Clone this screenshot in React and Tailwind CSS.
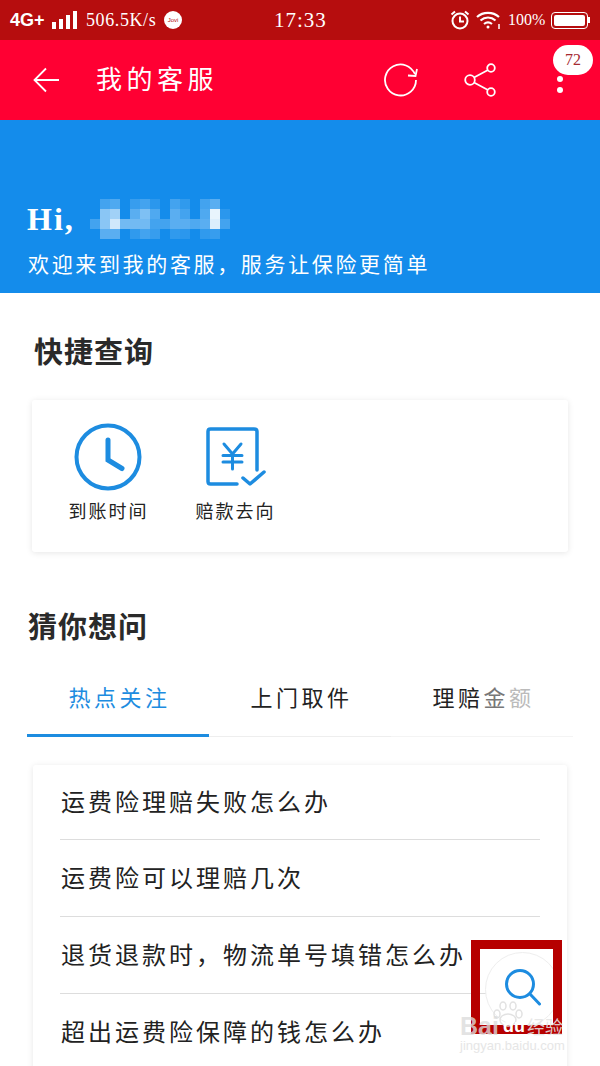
const cjk = "font-['Noto_Sans_CJK_SC',sans-serif]";
const serif = "font-['Liberation_Serif','Noto_Sans_CJK_SC',serif]";

const blur = [
  [0, .2, .25, 0, .15, .2, .1, 0, .2, .12, 0, .2, .3, 0],
  [0, .5, .6, 0, .3, .45, .25, 0, .3, .2, 0, .25, .9, .1],
  [.2, .5, .8, .4, .4, .4, .2, .2, .3, .3, .25, .3, .85, .2],
  [0, .3, .3, 0, .12, .2, .15, 0, .12, .1, 0, .12, .15, 0],
];

const questions = [
  "运费险理赔失败怎么办",
  "运费险可以理赔几次",
  "退货退款时，物流单号填错怎么办",
  "超出运费险保障的钱怎么办",
];

const StatusBar = () => (
  <div className="flex h-10 shrink-0 items-center bg-[#b60d0e] pl-[10px] pr-[10px] text-white">
    <span className="w-[42px] font-['Liberation_Sans',sans-serif] text-[18px] font-bold leading-none">4G+</span>
    <div className="flex h-[18px] items-end gap-[3px]">
      <span className="h-[7px] w-[4px] bg-white" />
      <span className="h-[10px] w-[4px] bg-white" />
      <span className="h-[14px] w-[4px] bg-white" />
      <span className="h-[18px] w-[4px] bg-white" />
    </div>
    <span className={`${serif} ml-[9px] w-[78px] text-[18px] leading-none tracking-[.6px]`}>506.5K/s</span>
    <span className="flex h-[18px] w-[18px] items-center justify-center rounded-full bg-white font-['Liberation_Sans',sans-serif] text-[6px] text-[#b60d0e]">Jovi</span>
    <span className={`${serif} ml-[92px] w-[176px] text-[21px] leading-none tracking-[1px]`}>17:33</span>
    <svg width="20" height="20" viewBox="0 0 20 20" fill="none" stroke="white" strokeWidth="2">
      <circle cx="10" cy="11" r="7.5" />
      <path d="M10 6.5V11.5H14M1.5 4.5 5 1.5M18.5 4.5 15 1.5" />
    </svg>
    <svg className="ml-[6px]" width="26" height="20" viewBox="0 0 26 20" fill="none" stroke="white" strokeWidth="2.2">
      <path d="M1 7C7 1.5 17 1.5 23 7M4.5 10.5C9 6.5 15 6.5 19.5 10.5M8 14C10.5 12 13.500 12 16 14" />
      <circle cx="12" cy="17" r="1.500" fill="white" stroke="none" />
      <path d="M23 14V19" strokeWidth="1.500" />
    </svg>
    <span className={`${serif} ml-[6px] w-[43px] text-[16px] leading-none`}>100%</span>
    <div className="flex items-center">
      <div className="h-[17px] w-[37px] rounded-[4px] border border-white p-[2px]">
        <div className="h-full w-full rounded-[2px] bg-white" />
      </div>
      <span className="h-[6px] w-[2px] bg-white" />
    </div>
  </div>
);

const Header = () => (
  <div className="relative flex h-20 shrink-0 items-center bg-[#ff0033] text-white">
    <svg className="ml-[33px]" width="27" height="26" viewBox="0 0 27 26" fill="none" stroke="white" strokeWidth="1.800">
      <path d="M26 13H1.500M13 1.500 1.500 13 13 24.500" />
    </svg>
    <span className={`${cjk} ml-9 pb-[6px] text-[26px] tracking-[4.500px]`}>我的客服</span>
    <svg className="ml-auto" width="36" height="36" viewBox="0 0 36 36" fill="none" stroke="white" strokeWidth="1.800">
      <path d="M33 18A15.500 15.500 0 1 1 23 3.500C27 5 29.500 7.500 32 12" />
      <path d="M25 13.500 32.500 14 34 7" />
    </svg>
    <svg className="ml-[44px]" width="36" height="36" viewBox="0 0 36 36" fill="none" stroke="white" strokeWidth="1.800">
      <circle cx="7" cy="18" r="4.800" />
      <circle cx="28" cy="6" r="3.800" />
      <circle cx="28" cy="30" r="3.800" />
      <path d="M11 15.500 25 8M11 20.500 25 28" />
    </svg>
    <div className="ml-[58px] mr-[37px] mt-2 flex flex-col gap-[5px]">
      <span className="h-[6px] w-[6px] rounded-full bg-white" />
      <span className="h-[6px] w-[6px] rounded-full bg-white" />
    </div>
    <span className={`${serif} absolute right-[7px] top-[5px] flex h-[30px] w-10 items-center justify-center rounded-full bg-white text-[16px] text-[#a62a30]`}>72</span>
  </div>
);

const Greeting = () => (
  <div className="flex h-[173px] shrink-0 flex-col justify-end bg-[#148ceb] pl-[27px] pb-[15px] text-white">
    <div className="flex items-center">
      <span className={`${serif} w-[63px] text-[32px] font-bold leading-[40px] tracking-[2px]`}>Hi,</span>
      <div className="grid grid-cols-[repeat(14,10px)] grid-rows-[repeat(4,10px)]">
        {blur.flat().map((a, i) => (
          <span key={i} className="bg-white" style={{ opacity: a }} />
        ))}
      </div>
    </div>
    <p className={`${cjk} ml-px mt-[9px] text-[21px] leading-[30px] tracking-[2.650px]`}>欢迎来到我的客服，服务让保险更简单</p>
  </div>
);

const ClockIcon = () => (
  <svg width="68" height="68" viewBox="0 0 68 68" fill="none" stroke="#1d8ce0" strokeWidth="4" strokeLinecap="round">
    <circle cx="34" cy="34" r="31.500" />
    <path d="M34 17V37L48 45.500" strokeWidth="5" />
  </svg>
);

const PayIcon = () => (
  <svg className="ml-[2px]" width="60" height="60" viewBox="0 0 60 60" fill="none" stroke="#1d8ce0" strokeWidth="3.500" strokeLinecap="round" strokeLinejoin="round">
    <path d="M31 57H4.500Q2 57 2 54.500V4.500Q2 2 4.500 2H48Q51 2 51 4.500V43" />
    <path d="M18 17 26.500 27 35 17M26.500 27V42M17 28.500H36M17 35H36" strokeWidth="3" />
    <path d="M37 51 44 57 58 45" />
  </svg>
);

const Quick = ({ icon, label }) => (
  <div className="flex w-[127px] flex-col items-center">
    <div className="flex h-[68px] items-center">{icon}</div>
    <span className={`${cjk} mt-[7px] pl-[2px] text-[18px] leading-[24px] tracking-[2px] text-[#222]`}>{label}</span>
  </div>
);

const Overlay = () => (
  <>
    <div className="absolute left-[485px] top-[952px] h-[75px] w-[75px] rounded-full border border-[#eee] bg-white" />
    <svg className="absolute left-[505px] top-[969px]" width="36" height="38" viewBox="0 0 36 38" fill="none" stroke="#1d8ce0" strokeWidth="3" strokeLinecap="round">
      <circle cx="15" cy="15" r="13.500" />
      <path d="M25 25 34.500 35" />
    </svg>
    <div className="absolute left-[471px] top-[940px] h-[94px] w-[91px] border-[9px] border-[#b60000]" />
    <svg className="absolute left-[490px] top-[1000px]" width="36" height="28" viewBox="0 0 36 28" fill="none" stroke="#e2e2e2" strokeWidth="1.500">
      <ellipse cx="18" cy="20" rx="8" ry="6" />
      <ellipse cx="7" cy="14" rx="3" ry="4" />
      <ellipse cx="13" cy="6" rx="3" ry="4" />
      <ellipse cx="23" cy="6" rx="3" ry="4" />
      <ellipse cx="29" cy="14" rx="3" ry="4" />
    </svg>
    <span className="absolute left-[460px] top-[1015px] whitespace-nowrap font-['Liberation_Sans',sans-serif] text-[25px] font-bold leading-[22px] text-[#dcdcdc]/80">Bai</span>
    <span className="absolute left-[503px] top-[1016px] whitespace-nowrap font-['Liberation_Sans',sans-serif] text-[18px] font-bold leading-[20px] text-white">du</span>
    <span className={`${cjk} absolute left-[527px] top-[1015px] whitespace-nowrap text-[18px] leading-[22px] text-[#e4e4e4]/90`}>经验</span>
    <span className="absolute left-[460px] top-[1038px] whitespace-nowrap font-['Liberation_Sans',sans-serif] text-[13px] leading-4 text-[#e6e6e6]">jingyan.baidu.com</span>
  </>
);

export default function App() {
  return (
    <div className="relative flex h-[1066px] w-[600px] flex-col overflow-hidden bg-white">
      <StatusBar />
      <Header />
      <Greeting />

      <h2 className={`${cjk} ml-[34px] mt-9 text-[29px] font-bold leading-[42px] tracking-[1px] text-[#2a2a2a]`}>快捷查询</h2>

      <div className="mx-8 mt-[29px] flex h-[152px] shrink-0 rounded-[3px] bg-white pl-3 pt-[23px] shadow-[0_1px_6px_rgba(0,0,0,0.1)]">
        <Quick icon={<ClockIcon />} label="到账时间" />
        <Quick icon={<PayIcon />} label="赔款去向" />
      </div>

      <h2 className={`${cjk} ml-7 mt-[52px] text-[29px] font-bold leading-[42px] tracking-[1px] text-[#2a2a2a]`}>猜你想问</h2>

      <div className={`${cjk} mx-[27px] mt-[15px] flex h-[76px] shrink-0 text-[22px] tracking-[3.500px] text-[#222]`}>
        <div className="flex w-[182px] items-center justify-center border-b-[3px] border-[#1d8ce0] pl-[3px] pb-[2px] text-[#1d8ce0]">热点关注</div>
        <div className="flex w-[182px] items-center justify-center border-b border-[#eee] pl-[3px] pb-1">上门取件</div>
        <div className="flex w-[182px] items-center justify-center border-b border-[#f4f4f4] pl-[3px] pb-1">
          理赔<span className="text-[#777]">金</span><span className="text-[#bbb]">额</span>
        </div>
      </div>

      <div className="mx-[33px] mt-7 rounded-[3px] bg-white px-[27px] shadow-[0_1px_6px_rgba(0,0,0,0.1)]">
        {questions.map((q) => (
          <div key={q} className={`${cjk} flex h-[77px] items-center border-b border-[#ddd] pl-px pb-[3px] text-[24px] tracking-[3px] text-[#222] first:h-[75px] last:border-b-0`}>
            {q}
          </div>
        ))}
      </div>

      <Overlay />
    </div>
  );
}
